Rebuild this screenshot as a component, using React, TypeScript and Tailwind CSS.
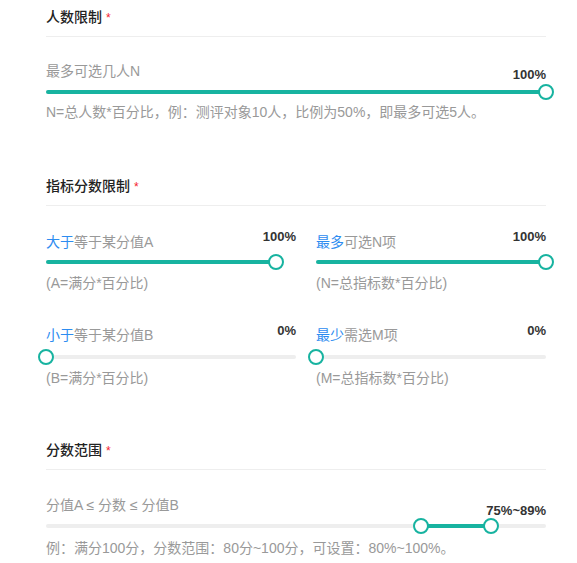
import React from 'react';

const TEAL = '#17b3a0';

interface SliderProps {
  from?: number;
  to: number;
  range?: boolean;
  value: string;
  valueTop: string;
  trackClass: string;
  valueClass: string;
}

function Handle({ pos }: { pos: number }) {
  return (
    <span
      className="absolute top-1/2 h-4 w-4 -translate-x-1/2 -translate-y-1/2 rounded-full border-2 border-[#17b3a0] bg-white"
      style={{ left: `${pos}%` }}
    />
  );
}

function Slider({ from = 0, to, range = false, value, valueTop, trackClass, valueClass }: SliderProps) {
  return (
    <div className="relative h-4">
      <span className={`absolute whitespace-nowrap text-[13px] font-bold leading-4 text-[#333] ${valueTop} ${valueClass}`}>{value}</span>
      <div className={`relative h-4 ${trackClass}`}>
        <div className="absolute left-0 right-0 top-1/2 h-1 -translate-y-1/2 rounded-full bg-[#eeeeee]" />
        <div
          className="absolute top-1/2 h-1 -translate-y-1/2 rounded-full"
          style={{ left: `${from}%`, width: `${to - from}%`, background: TEAL }}
        />
        {range && <Handle pos={from} />}
        <Handle pos={to} />
      </div>
    </div>
  );
}

function SectionTitle({ children, className = '' }: { children: React.ReactNode; className?: string }) {
  return (
    <div className={`border-b border-[#eeeeee] pb-[8px] text-[14px] font-medium leading-5 text-[#222] ${className}`}>
      {children} <span className="text-[12px] text-[#f5222d]">*</span>
    </div>
  );
}

function Label({ blue, rest, className = '' }: { blue?: string; rest: string; className?: string }) {
  return (
    <div className={`text-[14px] leading-5 text-[#999] ${className}`}>
      {blue && <span className="text-[#2d8cf0]">{blue}</span>}
      {rest}
    </div>
  );
}

function Help({ children, className = '' }: { children: React.ReactNode; className?: string }) {
  return <div className={`text-[14px] leading-5 text-[#999] ${className}`}>{children}</div>;
}

export default function App() {
  return (
    <div
      className="min-h-[563px] w-[577px] bg-white pl-[46px]"
      style={{ fontFamily: '"Liberation Sans", "Noto Sans CJK SC", sans-serif' }}
    >
      <div className="w-[500px]">
        {/* 人数限制 */}
        <SectionTitle className="pt-[7px]">人数限制</SectionTitle>
        <Label rest="最多可选几人N" className="mt-[24px]" />
        <div className="mt-[3px]">
          <Slider to={100} value="100%" valueTop="top-[-17px]" valueClass="right-0" trackClass="" />
        </div>
        <Help className="mt-[2px]">N=总人数*百分比，例：测评对象10人，比例为50%，即最多可选5人。</Help>

        {/* 指标分数限制 */}
        <SectionTitle className="mt-[54px]">指标分数限制</SectionTitle>
        <div className="mt-[26px] grid grid-cols-2">
          <div>
            <Label blue="大于" rest="等于某分值A" />
            <div className="mt-[2px]">
              <Slider to={100} value="100%" valueTop="top-[-25px]" valueClass="right-0" trackClass="mr-[20px]" />
            </div>
            <Help className="mt-[3px]">(A=满分*百分比)</Help>
          </div>
          <div className="pl-[20px]">
            <Label blue="最多" rest="可选N项" />
            <div className="mt-[2px]">
              <Slider to={100} value="100%" valueTop="top-[-25px]" valueClass="right-0" trackClass="" />
            </div>
            <Help className="mt-[3px]">(N=总指标数*百分比)</Help>
          </div>
        </div>
        <div className="mt-[32px] grid grid-cols-2">
          <div>
            <Label blue="小于" rest="等于某分值B" />
            <div className="mt-[4px]">
              <Slider to={0} value="0%" valueTop="top-[-26px]" valueClass="right-0" trackClass="" />
            </div>
            <Help className="mt-[3px]">(B=满分*百分比)</Help>
          </div>
          <div className="pl-[20px]">
            <Label blue="最少" rest="需选M项" />
            <div className="mt-[4px]">
              <Slider to={0} value="0%" valueTop="top-[-26px]" valueClass="right-0" trackClass="" />
            </div>
            <Help className="mt-[3px]">(M=总指标数*百分比)</Help>
          </div>
        </div>

        {/* 分数范围 */}
        <SectionTitle className="mt-[52px]">分数范围</SectionTitle>
        <Label rest="分值A ≤ 分数 ≤ 分值B" className="mt-[25px]" />
        <div className="mt-[3px]">
          <Slider range from={75} to={89} value="75%~89%" valueTop="top-[-15px]" valueClass="right-0" trackClass="" />
        </div>
        <Help className="mt-[4px]">例：满分100分，分数范围：80分~100分，可设置：80%~100%。</Help>
      </div>
    </div>
  );
}
